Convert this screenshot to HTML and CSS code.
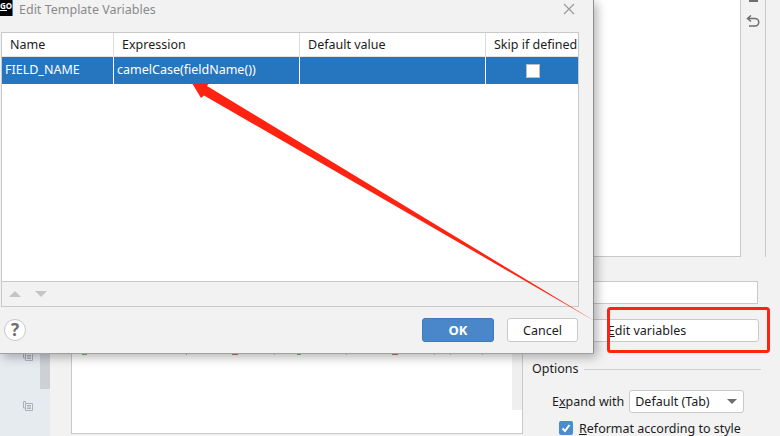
FILE: index.html
```html
<!DOCTYPE html>
<html lang="en">
<head>
    <meta charset="UTF-8">
    <meta name="viewport" content="width=device-width, initial-scale=1.0">
    <title>Edit Template Variables</title>
    <link rel="stylesheet" href="styles.css">
</head>
<body>
    <div class="page">
        <div class="gutter">
            <svg class="copy-icon" width="10" height="10" viewBox="0 0 10 10"><path d="M2.500 2V.5h-2v6.500H2M2.500 2.500h7v7h-7zM4 4.500h4M4 6h4M4 7.500h4" fill="none" stroke="#a9b2ba"/></svg>
            <svg class="copy-icon" width="10" height="10" viewBox="0 0 10 10"><path d="M2.500 2V.5h-2v6.500H2M2.500 2.500h7v7h-7zM4 4.500h4M4 6h4M4 7.500h4" fill="none" stroke="#a9b2ba"/></svg>
            <div class="gutter-thumb"></div>
        </div>
        <div class="editor-col">
            <div class="editor">
                <div class="editor-scroll"></div>
            </div>
        </div>
        <div class="side">
            <div class="side-top">
                <div class="side-text"></div>
                <div class="side-tools">
                    <span class="tool-bar"></span>
                    <svg width="14" height="14" viewBox="0 0 14 14"><path d="M1.500 3.500h7.500a3.500 3.500 0 0 1 0 7.500H3M5 .5L1.500 3.500 5 6.500" fill="none" stroke="#6e6e6e" stroke-width="1.500"/></svg>
                </div>
            </div>
            <input class="field" type="text">
            <button class="side-btn"><u>E</u>dit variables</button>
            <div class="options-title"><span>Options</span><i></i></div>
            <div class="expand-row">
                <label>E<u>x</u>pand with</label>
                <div class="select"><span>Default (Tab)</span><b></b></div>
            </div>
            <div class="check-row">
                <span class="check">
                    <svg width="14" height="14" viewBox="0 0 14 14"><path d="M3.500 7.500l2.500 2.500 4.500-6" fill="none" stroke="#fff" stroke-width="2"/></svg>
                </span>
                <span><u>R</u>eformat according to style</span>
            </div>
        </div>
    </div>

    <div class="dialog">
        <div class="title-bar">
            <div class="app-icon">GO</div>
            <span class="title">Edit Template Variables</span>
            <svg class="close" width="12" height="12" viewBox="0 0 12 12"><path d="M1 1l10 10M11 1L1 11" stroke="#9a9a9a" stroke-width="1.200"/></svg>
        </div>
        <div class="table">
            <div class="row head">
                <div class="cell c-name">Name</div>
                <div class="cell c-expr">Expression</div>
                <div class="cell c-def">Default value</div>
                <div class="cell c-skip">Skip if defined</div>
            </div>
            <div class="row selected">
                <div class="cell c-name">FIELD_NAME</div>
                <div class="cell c-expr">camelCase(fieldName())</div>
                <div class="cell c-def"></div>
                <div class="cell c-skip"><span class="box"></span></div>
            </div>
            <div class="table-body"></div>
            <div class="table-tools">
                <span class="tri up"></span>
                <span class="tri down"></span>
            </div>
        </div>
        <div class="dialog-foot">
            <div class="help">?</div>
            <button class="btn ok">OK</button>
            <button class="btn cancel">Cancel</button>
        </div>
    </div>

    <svg class="marks" width="780" height="436" viewBox="0 0 780 436">
        <!-- bottoms of the code line that sits behind the dialog -->
        <g opacity="0.7">
            <rect x="82" y="354" width="5" height="1" fill="#2f7d32"/>
            <rect x="186" y="354" width="1" height="1" fill="#8a5a9a"/>
            <rect x="232" y="354" width="6" height="1" fill="#8c2f2f"/>
            <rect x="274" y="354" width="1" height="1" fill="#a87a3a"/>
            <rect x="297" y="354" width="4" height="1" fill="#2f7d32"/>
            <rect x="346" y="354" width="1" height="1" fill="#a87a3a"/>
            <rect x="392" y="354" width="6" height="1" fill="#8c2f2f"/>
            <rect x="434" y="354" width="1" height="1" fill="#a87a3a"/>
            <rect x="450" y="354" width="1" height="1" fill="#a87a3a"/>
            <rect x="482" y="354" width="1" height="1" fill="#a87a3a"/>
        </g>

        <polygon points="192,83 209,83 207,86 595.500,321.500 204,95.500 201,98" fill="#ff2312"/>
        <rect x="608.500" y="308.500" width="160" height="43" rx="2" fill="none" stroke="#ff2312" stroke-width="3"/>
    </svg>
</body>
</html>
```

FILE: styles.css
```css
html, body {
    margin: 0;
    padding: 0;
}
body {
    width: 780px;
    height: 436px;
    overflow: hidden;
    position: relative;
    background-color: #f2f2f2;
    font-family: 'Noto Sans', sans-serif;
    font-size: 12.5px;
    color: #1c1c1c;
}
button {
    font-family: inherit;
    font-size: 12.5px;
    color: #1c1c1c;
}
.page {
    display: flex;
    height: 436px;
}
.gutter {
    width: 50px;
    flex-shrink: 0;
    background-color: #e6ebf0;
    position: relative;
    display: flex;
    flex-direction: column;
    align-items: flex-end;
    gap: 40px;
    padding: 351px 17px 0 0;
    box-sizing: border-box;
}
.gutter-thumb {
    position: absolute;
    right: 0;
    top: 340px;
    width: 10px;
    height: 49px;
    background-color: #cdd1d6;
}
.editor-col {
    width: 473px;
    flex-shrink: 0;
    padding-left: 21px;
    box-sizing: border-box;
}
.editor {
    height: 434px;
    background-color: #fff;
    border: 1px solid #c9c9c9;
    box-sizing: border-box;
    display: flex;
    justify-content: flex-end;
}
.editor-scroll {
    width: 10px;
    height: 409px;
    background-color: #efefef;
}
.side {
    flex: 1;
    padding-left: 9px;
}
.side-top {
    display: flex;
    height: 257px;
}
.side-text {
    width: 208px;
    background-color: #fff;
    border-right: 1px solid #c9c9c9;
    border-bottom: 1px solid #c9c9c9;
}
.side-tools {
    width: 24px;
    border-right: 1px solid #c9c9c9;
    display: flex;
    flex-direction: column;
    align-items: center;
}
.tool-bar {
    width: 9px;
    height: 2px;
    background-color: #6e6e6e;
    margin-bottom: 13px;
}
.field {
    display: block;
    width: 226px;
    height: 23px;
    margin-top: 24px;
    box-sizing: border-box;
    border: 1px solid #c9c9c9;
    background-color: #fff;
}
.side-btn {
    display: block;
    width: 227px;
    height: 23px;
    margin-top: 15px;
    padding: 0 0 0 3px;
    background-color: #fff;
    border: 1px solid #c9c9c9;
    border-radius: 3px;
    text-align: center;
}
.options-title {
    display: flex;
    align-items: center;
    gap: 6px;
    margin-top: 18px;
    line-height: 18px;
}
.options-title i {
    display: block;
    width: 177px;
    height: 1px;
    background-color: #d0d0d0;
}
.expand-row {
    display: flex;
    align-items: center;
    gap: 5px;
    margin-top: 12px;
    padding-left: 20px;
    height: 23px;
}
.select {
    width: 115px;
    height: 23px;
    box-sizing: border-box;
    background-color: #fff;
    border: 1px solid #c9c9c9;
    border-radius: 3px;
    padding-left: 5px;
    display: flex;
    align-items: center;
    justify-content: space-between;
}
.select b {
    width: 0;
    height: 0;
    margin-right: 6px;
    border-left: 5px solid transparent;
    border-right: 5px solid transparent;
    border-top: 5px solid #6e6e6e;
}
.check-row {
    display: flex;
    align-items: center;
    gap: 6px;
    margin-top: 7px;
    padding-left: 27px;
    height: 16px;
}
.check {
    width: 14px;
    height: 14px;
    border-radius: 2px;
    background-color: #4a8cd0;
    display: block;
    flex-shrink: 0;
}
.check svg {
    display: block;
}

.dialog {
    position: absolute;
    left: 0;
    top: 0;
    width: 593px;
    height: 353px;
    background-color: #f2f2f2;
    border-right: 1px solid #8e8e8e;
    border-bottom: 1px solid #a0a0a0;
    box-shadow: 3px 3px 10px rgba(0, 0, 0, 0.3);
}
.title-bar {
    height: 32px;
    display: flex;
    align-items: flex-start;
    position: relative;
}
.app-icon {
    width: 12px;
    height: 16px;
    background-color: #000;
    color: #fff;
    font-size: 8px;
    font-weight: bold;
    line-height: 11px;
    text-align: center;
    border-right: 1px solid #2f7fd0;
    overflow: hidden;
    position: relative;
}
.app-icon::after {
    content: "";
    position: absolute;
    left: 0;
    top: 10px;
    width: 7px;
    height: 1px;
    background-color: #fff;
}
.title {
    margin-left: 6px;
    line-height: 19px;
    color: #8a8a8a;
}
.close {
    position: absolute;
    left: 563px;
    top: 3px;
}
.table {
    margin-left: 1px;
    width: 578px;
    height: 275px;
    box-sizing: border-box;
    border: 1px solid #c9c9c9;
    background-color: #fff;
    display: flex;
    flex-direction: column;
}
.row {
    display: flex;
    flex-shrink: 0;
}
.head {
    height: 24px;
    line-height: 24px;
}
.selected {
    height: 27px;
    line-height: 26px;
    background-color: #2675bf;
    color: #fff;
}
.cell {
    box-sizing: border-box;
    border-right: 1px solid #fff;
    white-space: nowrap;
}
.head .cell {
    border-right-color: #dcdcdc;
    border-bottom: 1px solid #e4e4e4;
}
.c-name {
    width: 112px;
    padding-left: 3px;
}
.head .c-name {
    padding-left: 8px;
}
.c-expr {
    width: 186px;
    padding-left: 3px;
}
.head .c-expr {
    padding-left: 8px;
}
.c-def {
    width: 186px;
    padding-left: 8px;
}
.c-skip {
    flex: 1;
    border-right: none;
    padding-left: 8px;
    overflow: hidden;
}
.selected .c-skip {
    display: flex;
    align-items: center;
    justify-content: center;
    padding-left: 2px;
}
.box {
    width: 12px;
    height: 12px;
    background-color: #fff;
    border: 1px solid #bdbdbd;
}
.table-body {
    flex: 1;
}
.table-tools {
    height: 25px;
    flex-shrink: 0;
    box-sizing: border-box;
    background-color: #f2f2f2;
    border-top: 1px solid #c9c9c9;
    display: flex;
    align-items: center;
    gap: 14px;
    padding-left: 7px;
}
.tri {
    width: 0;
    height: 0;
    border-left: 6px solid transparent;
    border-right: 6px solid transparent;
}
.up {
    border-bottom: 6px solid #c4c4c4;
}
.down {
    border-top: 6px solid #c4c4c4;
}
.dialog-foot {
    display: flex;
    align-items: center;
    padding: 11px 15px 0 4px;
}
.help {
    width: 22px;
    height: 22px;
    box-sizing: border-box;
    border: 1px solid #c9c9c9;
    border-radius: 50%;
    background-color: #fff;
    color: #6e6e6e;
    font-weight: bold;
    font-size: 17px;
    line-height: 20px;
    text-align: center;
    margin-right: auto;
}
.btn {
    height: 24px;
    box-sizing: border-box;
    border-radius: 3px;
    padding: 0;
}
.ok {
    width: 72px;
    background-color: #4a87c8;
    border: 1px solid #3f79b8;
    color: #fff;
    font-weight: bold;
    font-size: 13px;
    margin-right: 13px;
}
.cancel {
    width: 71px;
    background-color: #fff;
    border: 1px solid #c9c9c9;
}
.marks {
    position: absolute;
    left: 0;
    top: 0;
}
```
